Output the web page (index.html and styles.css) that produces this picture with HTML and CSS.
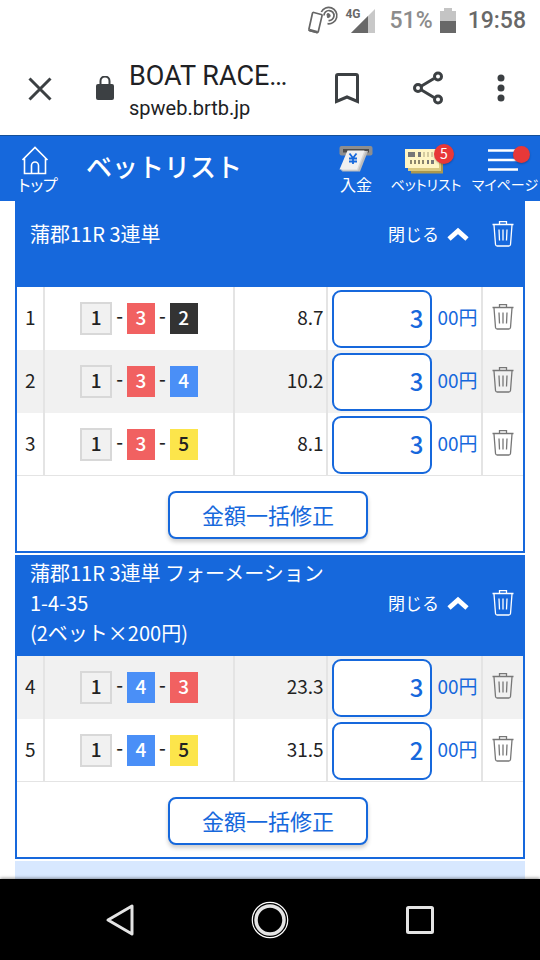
FILE: index.html
```html
<!DOCTYPE html>
<html lang="ja">
<head>
<meta charset="utf-8">
<meta name="viewport" content="width=device-width, initial-scale=1">
<title>BOAT RACE</title>
<link rel="stylesheet" href="styles.css">
</head>
<body>
<svg class="sprite" aria-hidden="true">
  <symbol id="trash" viewBox="0 0 24 28">
    <path d="M1.500 4.500H22.500M8.500 4V1.600H15.500V4M3 5L4.500 24.500Q4.700 26 6.200 26H17.800Q19.300 26 19.500 24.500L21 5M8 9.500L8.500 20.500M12 9.500V20.500M16 9.500L15.500 20.500" fill="none" stroke="currentColor" stroke-width="1.300"/>
  </symbol>
  <symbol id="chevron" viewBox="0 0 22 14">
    <path d="M2 12L11 4L20 12" fill="none" stroke="currentColor" stroke-width="4.800"/>
  </symbol>
</svg>

<div class="status">
  <svg width="32" height="32" viewBox="0 0 32 32" aria-hidden="true">
    <g fill="none" stroke="#666">
      <path d="M6.800 7.500L14.200 9.500Q15.300 9.800 15 10.900L11.300 26.500Q11 27.800 9.800 27.500L2.800 25.700Q1.600 25.400 1.900 24.200L5.400 8.500Q5.700 7.200 6.800 7.500Z" stroke-width="1.700"/>
      <path d="M2.500 25L10.500 27.200" stroke-width="2.600"/>
      <path d="M17 10.500A5 5 0 1 1 21.500 15.500M14.300 7A8.200 8.200 0 1 1 20.500 18.700" stroke-width="1.700"/>
      <path d="M20 9A2 2 0 1 1 20.500 12.500Z" fill="#666"/>
    </g>
  </svg>
  <span class="network">4G</span>
  <svg class="signal" width="24" height="24" viewBox="0 0 24 24" aria-hidden="true">
    <path d="M0 24L24 0V24Z" fill="#c8c8c8"/><path d="M0 24L17 7V24Z" fill="#686868"/>
  </svg>
  <span class="percent">51%</span>
  <svg width="16" height="26" viewBox="0 0 16 26" aria-hidden="true">
    <path d="M0 3H4V0H12V3H16V14H0Z" fill="#c4c4c4"/><path d="M0 13H16V25H0Z" fill="#686868"/>
  </svg>
  <time>19:58</time>
</div>

<div class="browser">
  <button class="tool close" type="button" aria-label="閉じる">
    <svg width="24" height="24" viewBox="0 0 24 24"><path d="M1.500 1.500L22.500 22.500M22.500 1.500L1.500 22.500" stroke="#3c4043" stroke-width="3"/></svg>
  </button>
  <svg class="lock" width="20" height="26" viewBox="0 0 20 26" aria-hidden="true">
    <rect x="1" y="8" width="18" height="16" rx="2" fill="#3c4043"/><path d="M5.500 9V5A4.500 4.500 0 0 1 14.500 5V9" fill="none" stroke="#3c4043" stroke-width="2"/>
  </svg>
  <div class="address">
    <div class="page-name">BOAT RACE…</div>
    <div class="domain">spweb.brtb.jp</div>
  </div>
  <button class="tool bookmark" type="button" aria-label="ブックマーク">
    <svg width="24" height="32" viewBox="0 0 24 32"><path d="M1.500 28.500V3Q1.500 1.500 3 1.500H21Q22.500 1.500 22.500 3V28.500L12 24Z" fill="none" stroke="#3c4043" stroke-width="3"/></svg>
  </button>
  <button class="tool share" type="button" aria-label="共有">
    <svg width="32" height="36" viewBox="0 0 32 36"><g fill="none" stroke="#3c4043" stroke-width="3"><path d="M9.500 15L22 7.500M9.500 19L22 26.500"/><circle cx="6" cy="17" r="3.500"/><circle cx="26" cy="5.500" r="3.500"/><circle cx="26" cy="28.500" r="3.500"/></g></svg>
  </button>
  <button class="tool more" type="button" aria-label="メニュー">
    <svg width="8" height="30" viewBox="0 0 8 30"><g fill="#3c4043"><circle cx="4" cy="4" r="3.500"/><circle cx="4" cy="14" r="3.500"/><circle cx="4" cy="24" r="3.500"/></g></svg>
  </button>
</div>

<header class="site">
  <a class="link top" href="#">
    <svg width="32" height="32" viewBox="3 0 32 32" aria-hidden="true"><path d="M3.500 17L16 4.500L28.500 17M5.500 15.500V30.500H26.500V15.500M12.500 30V22.500A3.500 3.500 0 0 1 19.500 22.500V30" fill="none" stroke="#fff" stroke-width="1.600"/></svg>
    <span>トップ</span>
  </a>
  <h1>ベットリスト</h1>
  <a class="link pay" href="#">
    <svg width="36" height="32" viewBox="0 0 36 32" aria-hidden="true">
      <rect x="1.500" y="3" width="33" height="9.500" rx="2" fill="#8e8e8e"/><rect x="5" y="6" width="26" height="3.500" fill="#4c4c4c"/>
      <path d="M4 28.500H22L30 8H12Z" fill="#bcbcbc"/>
      <path d="M3 27.500H20L28 8H10Z" fill="#d6d6d6"/>
      <path d="M9.500 7.500H26.500L19 26.500H1.500Z" fill="#f0f0f0"/>
      <path d="M11.500 10.500L15 15L18.500 10.500M15 15V21M11 15.500H19M11 18.500H19" fill="none" stroke="#1668dc" stroke-width="1.800"/>
    </svg>
    <span>入金</span>
  </a>
  <a class="link bets" href="#">
    <svg width="44" height="32" viewBox="0 0 44 32" aria-hidden="true">
      <path d="M7 12H39V30.500H7Z" fill="#ab984e"/><path d="M4 9H37V28H4Z" fill="#d9c880"/><path d="M1 6H35V25H1Z" fill="#fff5c4"/>
      <g fill="#777"><path d="M4 9H11V14H4ZM14 9H17V14H14ZM23 17H25V21H23ZM27 17H30V21H27Z"/></g>
      <g fill="#d5cba0"><path d="M19 9H21V14H19ZM23 9H25V14H23ZM27 9H29V14H27Z"/></g>
      <g fill="#8c866c"><path d="M6 17H8V21H6ZM10 17H12V21H10ZM14 17H16V21H14ZM18 17H20V21H18Z"/></g>
    </svg>
    <b class="badge">5</b>
    <span>ベットリスト</span>
  </a>
  <a class="link mypage" href="#">
    <svg width="34" height="32" viewBox="0 0 34 32" aria-hidden="true"><path d="M0 7.500H30M0 17H30M0 26.500H30" stroke="#fff" stroke-width="2.400"/></svg>
    <b class="badge dot"></b>
    <span>マイページ</span>
  </a>
</header>

<main>
  <section class="group">
    <div class="head single">
      <h2>蒲郡11R 3連単</h2>
      <button class="toggle" type="button">閉じる<svg width="22" height="14"><use href="#chevron"/></svg></button>
      <button class="delete" type="button" aria-label="削除"><svg width="24" height="28"><use href="#trash"/></svg></button>
    </div>
    <table>
      <colgroup><col class="c-no"><col class="c-bet"><col class="c-odds"><col class="c-amount"><col class="c-delete"></colgroup>
      <tbody>
      <tr>
        <td>1</td>
        <td><div class="combo"><i class="n1">1</i><span>-</span><i class="n3">3</i><span>-</span><i class="n2">2</i></div></td>
        <td class="odds">8.7</td>
        <td class="bet-amount"><label class="amount"><input type="text" inputmode="numeric" value="3"><span>00円</span></label></td>
        <td><button class="delete" type="button" aria-label="削除"><svg width="24" height="28"><use href="#trash"/></svg></button></td>
      </tr>
      <tr class="shade">
        <td>2</td>
        <td><div class="combo"><i class="n1">1</i><span>-</span><i class="n3">3</i><span>-</span><i class="n4">4</i></div></td>
        <td class="odds">10.2</td>
        <td class="bet-amount"><label class="amount"><input type="text" inputmode="numeric" value="3"><span>00円</span></label></td>
        <td><button class="delete" type="button" aria-label="削除"><svg width="24" height="28"><use href="#trash"/></svg></button></td>
      </tr>
      <tr>
        <td>3</td>
        <td><div class="combo"><i class="n1">1</i><span>-</span><i class="n3">3</i><span>-</span><i class="n5">5</i></div></td>
        <td class="odds">8.1</td>
        <td class="bet-amount"><label class="amount"><input type="text" inputmode="numeric" value="3"><span>00円</span></label></td>
        <td><button class="delete" type="button" aria-label="削除"><svg width="24" height="28"><use href="#trash"/></svg></button></td>
      </tr>
      </tbody>
    </table>
    <div class="foot"><button class="bulk" type="button">金額一括修正</button></div>
  </section>

  <section class="group">
    <div class="head">
      <h2>蒲郡11R 3連単 フォーメーション<br>1-4-35<br>(2ベット×200円)</h2>
      <button class="toggle" type="button">閉じる<svg width="22" height="14"><use href="#chevron"/></svg></button>
      <button class="delete" type="button" aria-label="削除"><svg width="24" height="28"><use href="#trash"/></svg></button>
    </div>
    <table>
      <colgroup><col class="c-no"><col class="c-bet"><col class="c-odds"><col class="c-amount"><col class="c-delete"></colgroup>
      <tbody>
      <tr class="shade">
        <td>4</td>
        <td><div class="combo"><i class="n1">1</i><span>-</span><i class="n4">4</i><span>-</span><i class="n3">3</i></div></td>
        <td class="odds">23.3</td>
        <td class="bet-amount"><label class="amount"><input type="text" inputmode="numeric" value="3"><span>00円</span></label></td>
        <td><button class="delete" type="button" aria-label="削除"><svg width="24" height="28"><use href="#trash"/></svg></button></td>
      </tr>
      <tr>
        <td>5</td>
        <td><div class="combo"><i class="n1">1</i><span>-</span><i class="n4">4</i><span>-</span><i class="n5">5</i></div></td>
        <td class="odds">31.5</td>
        <td class="bet-amount"><label class="amount"><input type="text" inputmode="numeric" value="2"><span>00円</span></label></td>
        <td><button class="delete" type="button" aria-label="削除"><svg width="24" height="28"><use href="#trash"/></svg></button></td>
      </tr>
      </tbody>
    </table>
    <div class="foot"><button class="bulk" type="button">金額一括修正</button></div>
  </section>

  <div class="summary"></div>
</main>

<nav class="system">
  <button type="button" aria-label="戻る"><svg width="40" height="40" viewBox="0 0 40 40"><path d="M8 20L32 6V34Z" fill="none" stroke="#e4e4e4" stroke-width="3" stroke-linejoin="round"/></svg></button>
  <button type="button" aria-label="ホーム"><svg width="40" height="40" viewBox="0 0 40 40"><g fill="none" stroke="#e4e4e4"><circle cx="20" cy="20" r="14" stroke-width="3.500"/><circle cx="20" cy="20" r="17.700" stroke-width="1.200" stroke="#fff"/></g></svg></button>
  <button type="button" aria-label="アプリ履歴"><svg width="40" height="40" viewBox="0 0 40 40"><rect x="7.500" y="7.500" width="25" height="25" rx="1" fill="none" stroke="#e4e4e4" stroke-width="3"/></svg></button>
</nav>
</body>
</html>
```
FILE: styles.css
```css
:root {
  --blue: #1668dc;
  --line: #e4e4e4;
}

* {
  box-sizing: border-box;
}

body {
  display: flex;
  flex-direction: column;
  min-height: 100vh;
  margin: 0;
  background: #fff;
  color: #222;
  font-family: "Noto Sans CJK JP", sans-serif;
  font-size: 20px;
  line-height: 30px;
}

button {
  display: flex;
  align-items: center;
  justify-content: center;
  padding: 0;
  border: 0;
  background: none;
  color: inherit;
  font: inherit;
}

svg {
  display: block;
  flex: none;
}

.sprite {
  position: absolute;
  width: 0;
  height: 0;
}

/* Device status bar */
.status {
  display: flex;
  align-items: center;
  justify-content: flex-end;
  height: 42px;
  padding-right: 14px;
  color: #686868;
  font-family: Roboto, sans-serif;
  font-size: 23px;
  font-weight: 500;
}

.status svg {
  margin-right: 12px;
}

.status > svg:first-child {
  margin-right: 6px;
}

.network {
  align-self: flex-start;
  padding-top: 6px;
  font-size: 12px;
  font-weight: 700;
  line-height: 16px;
}

.status .signal {
  margin-left: -10px;
  margin-right: 15px;
}

.percent {
  margin-right: 7px;
  color: #8c8c8c;
}

/* Browser toolbar */
.browser {
  display: flex;
  align-items: center;
  height: 93px;
  padding: 0 16px 0 12px;
  font-family: Roboto, sans-serif;
}

.tool {
  width: 56px;
  height: 56px;
}

.lock {
  margin: 0 14px 0 27px;
}

.address {
  flex: 1;
  min-width: 0;
  padding-top: 4px;
  color: #202124;
}

.page-name {
  font-size: 27px;
  line-height: 34px;
}

.domain {
  font-size: 20px;
  line-height: 30px;
}

.share {
  margin: 0 22px 0 25px;
}

.more {
  width: 46px;
}

/* Site header */
.site {
  display: flex;
  align-items: flex-start;
  padding: 8px 0;
  background: var(--blue);
  box-shadow: inset 0 1px #155098;
  color: #fff;
}

.site h1 {
  flex: 1;
  margin: 0 0 0 10px;
  font-size: 26px;
  font-weight: 500;
  line-height: 46px;
}

.link {
  position: relative;
  display: flex;
  flex-direction: column;
  align-items: center;
  color: inherit;
  font-size: 16px;
  font-feature-settings: "palt";
  line-height: 18px;
  text-decoration: none;
  white-space: nowrap;
}

.top {
  width: 76px;
}

.pay {
  width: 52px;
}

.bets {
  width: 88px;
  font-size: 14px;
}

.mypage {
  width: 70px;
  font-size: 14px;
}

.badge {
  position: absolute;
  top: 1px;
  right: 16px;
  width: 20px;
  height: 20px;
  border-radius: 50%;
  background: #e83838;
  box-shadow: 0 1px 2px #0004;
  font-size: 14px;
  font-weight: 400;
  line-height: 19px;
  text-align: center;
}

.dot {
  top: 3px;
  right: 10px;
  width: 17px;
  height: 17px;
}

/* Bet groups */
main {
  display: flex;
  flex: 1;
  flex-direction: column;
  gap: 2px;
  padding: 0 15px;
}

.group {
  border: solid var(--blue);
  border-width: 0 2px 2px;
}

.head {
  display: flex;
  align-items: center;
  padding: 3px 8px 8px 13px;
  background: var(--blue);
  color: #fff;
}

.single {
  padding-top: 18px;
  padding-bottom: 38px;
}

.head h2 {
  flex: 1;
  margin: 0;
  font-size: 20px;
  font-weight: 400;
}

.toggle {
  gap: 8px;
  margin-right: 22px;
  font-size: 17px;
}

table {
  width: 100%;
  border-collapse: separate;
  border-spacing: 0;
  table-layout: fixed;
  background: linear-gradient(var(--line), var(--line)) bottom / 100% 1px no-repeat;
}

.c-no {
  width: 5.6%;
}

.c-bet {
  width: 37.4%;
}

.c-odds {
  width: 18.4%;
}

.c-amount {
  width: 30.6%;
}

.c-delete {
  width: 8%;
}

td {
  height: 63px;
  padding: 0 0 4px;
  border-right: 2px solid var(--line);
  font-size: 19px;
  text-align: center;
}

td:last-child {
  border-right: 0;
}

.shade {
  background: #f1f1f1;
}

td .delete {
  width: 100%;
  color: #777;
}

.odds {
  padding-right: 2px;
  text-align: right;
}

.combo {
  display: flex;
  align-items: center;
  justify-content: center;
  gap: 4px;
  padding-top: 3px;
}

.combo span {
  padding-bottom: 6px;
  font-weight: 500;
}

.combo i {
  width: 28px;
  height: 31px;
  color: #fff;
  font-style: normal;
  font-weight: 500;
  line-height: 28px;
}

.combo .n1 {
  width: 32px;
  height: 33px;
  border: 2px solid #d8d8d8;
  background: #f1f1f1;
  color: #222;
  line-height: 26px;
}

.n2 {
  background: #333;
}

.n3 {
  background: #f16161;
}

.n4 {
  background: #4a8ff7;
}

.combo .n5 {
  background: #fce54b;
  color: #222;
}

.bet-amount {
  padding: 0;
}

.amount {
  display: flex;
  align-items: center;
  gap: 5px;
  padding: 0 3px 0 4px;
  color: var(--blue);
}

.amount span {
  padding-bottom: 4px;
}

.amount input {
  flex: 1;
  min-width: 0;
  height: 58px;
  padding: 0 7px 3px;
  border: 2px solid var(--blue);
  border-radius: 9px;
  background: #fff;
  color: inherit;
  font: 500 24px "Noto Sans CJK JP", sans-serif;
  text-align: right;
}

.foot {
  display: flex;
  justify-content: center;
  padding: 15px 4px 12px 0;
}

.bulk {
  width: 40%;
  height: 48px;
  padding-bottom: 3px;
  border: 2px solid var(--blue);
  border-radius: 8px;
  background: #fff;
  box-shadow: 0 3px 4px #0003;
  color: var(--blue);
  font-size: 22px;
}

.summary {
  flex: 1;
  background: #d8e8ff;
}

/* Device navigation */
.system {
  display: flex;
  justify-content: center;
  gap: 110px;
  height: 81px;
  background: #000;
  box-shadow: 0 -1px 3px #0006;
}
```
